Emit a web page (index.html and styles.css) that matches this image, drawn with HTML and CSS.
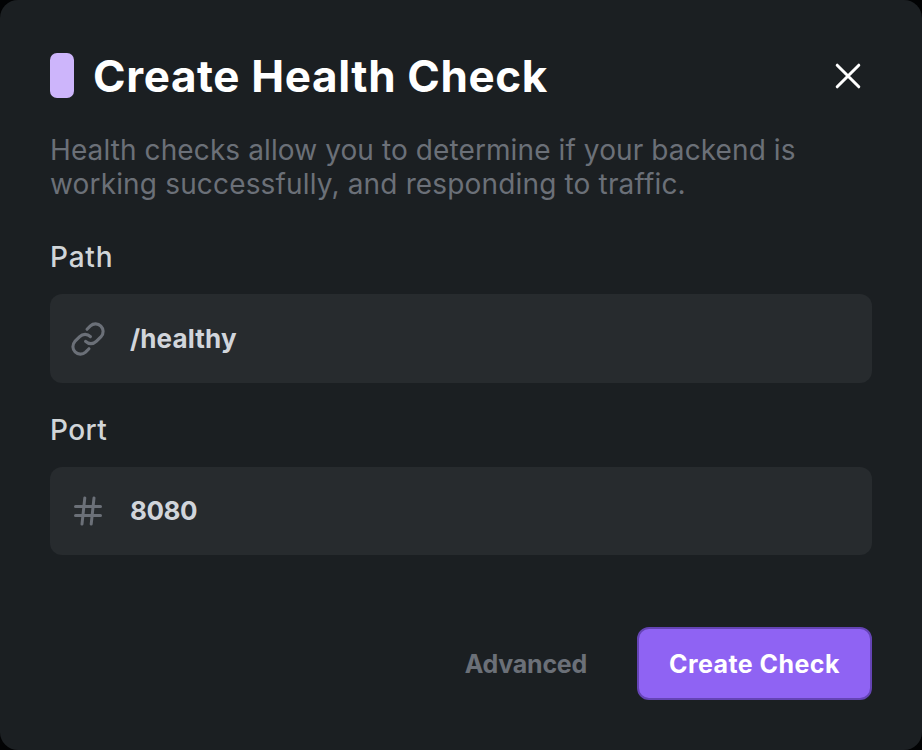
FILE: index.html
```
<!DOCTYPE html>
<html lang="en">
<head>
<meta charset="utf-8">
<title>Create Health Check</title>
<link rel="stylesheet" href="styles.css">
</head>
<body>
<main class="dialog">
  <header class="header">
    <span class="accent"></span>
    <h1 class="title">Create Health Check</h1>
    <button class="close" type="button" aria-label="Close">
      <svg width="28" height="28" viewBox="0 0 28 28"><path d="M3.2 3.2 24.8 24.8M24.8 3.2 3.2 24.8"/></svg>
    </button>
  </header>
  <p class="description"><span class="line line-first">Health checks allow you to determine if your backend is</span> <span class="line line-second">working successfully, and responding to traffic.</span></p>
  <section class="field">
    <span class="label label-path">Path</span>
    <div class="input input-path">
      <svg class="icon" width="44" height="44" viewBox="0 0 256 256"><g stroke-width="18"><path d="M122.3 71.4l19.8-19.8a44.1 44.1 0 0 1 62.3 62.3l-28.3 28.2a43.9 43.9 0 0 1-62.2 0"/><path d="M133.7 184.6l-19.8 19.8a44.1 44.1 0 0 1-62.3-62.3l28.3-28.2a43.9 43.9 0 0 1 62.2 0"/></g></svg>
      <span class="value value-path">/healthy</span>
    </div>
  </section>
  <section class="field">
    <span class="label label-port">Port</span>
    <div class="input">
      <svg class="icon" width="44" height="44" viewBox="0 0 44 44"><path stroke-width="3" d="M9.5 17.5H34.5M9.5 26.5H34.5M18.8 8.9 16 35.1M28 8.9 25.2 35.1"/></svg>
      <span class="value value-port">8080</span>
    </div>
  </section>
  <footer class="actions">
    <button class="button advanced" type="button"><span>Advanced</span></button>
    <button class="button primary" type="button"><span>Create Check</span></button>
  </footer>
</main>
</body>
</html>
```
FILE: styles.css
```
* { box-sizing: border-box; }

body {
  margin: 0;
  background: #020304;
  font-family: Inter, "Liberation Sans", sans-serif;
}

svg {
  display: block;
  flex: none;
  fill: none;
  stroke-linecap: round;
  stroke-linejoin: round;
}

button {
  padding: 0;
  border: 0;
  background: none;
  font: inherit;
}

.dialog {
  display: flex;
  flex-direction: column;
  width: 922px;
  height: 750px;
  padding: 50px;
  border-radius: 18px;
  background: #1b1f22;
}

.header {
  display: flex;
  align-items: center;
  height: 52px;
}

.accent {
  width: 24px;
  height: 45px;
  margin-right: 19px;
  margin-bottom: 1px;
  border-radius: 7px;
  background: #cdb5fb;
}

.title {
  margin: 0;
  color: #fff;
  font-size: 44px;
  font-weight: 700;
  line-height: 52px;
  letter-spacing: 0.62px;
  white-space: nowrap;
}

.close {
  margin-left: auto;
  margin-right: 10px;
  stroke: #fff;
  stroke-width: 3;
}

.description {
  margin: 31px 0 0;
  color: #6b7078;
  font-size: 28px;
  line-height: 34px;
}

.line {
  display: block;
  white-space: nowrap;
}

.line-first { letter-spacing: 0.1px; }

.line-second { letter-spacing: 0.16px; }

.field { margin-top: 35px; }

.field + .field { margin-top: 26px; }

.label {
  display: block;
  height: 43px;
  margin-bottom: 15px;
  color: #d1d5d8;
  font-size: 28px;
  font-weight: 500;
  line-height: 43px;
}

.label-path { letter-spacing: 0.8px; }

.label-port { letter-spacing: 0.4px; }

.input {
  display: flex;
  align-items: center;
  height: 88px;
  padding-left: 16px;
  border-radius: 12px;
  background: #272b2e;
}

.input-path { height: 89px; }

.icon { stroke: #6b7078; }

.value {
  margin-left: 20px;
  color: #d1d5db;
  font-size: 26px;
  font-weight: 700;
}

.value-path { letter-spacing: 0.15px; }

.value-port {
  margin-bottom: 2px;
  letter-spacing: -0.5px;
}

.actions {
  display: flex;
  justify-content: flex-end;
  align-items: center;
  gap: 50px;
  margin-top: auto;
}

.button {
  font-size: 25px;
  font-weight: 700;
  white-space: nowrap;
}

.advanced {
  color: #6b7078;
  letter-spacing: -0.25px;
}

.primary {
  width: 235px;
  height: 73px;
  border: 2px solid #6544b5;
  border-radius: 12px;
  background: #8f63f3;
  color: #fff;
  letter-spacing: 0.45px;
}
```
